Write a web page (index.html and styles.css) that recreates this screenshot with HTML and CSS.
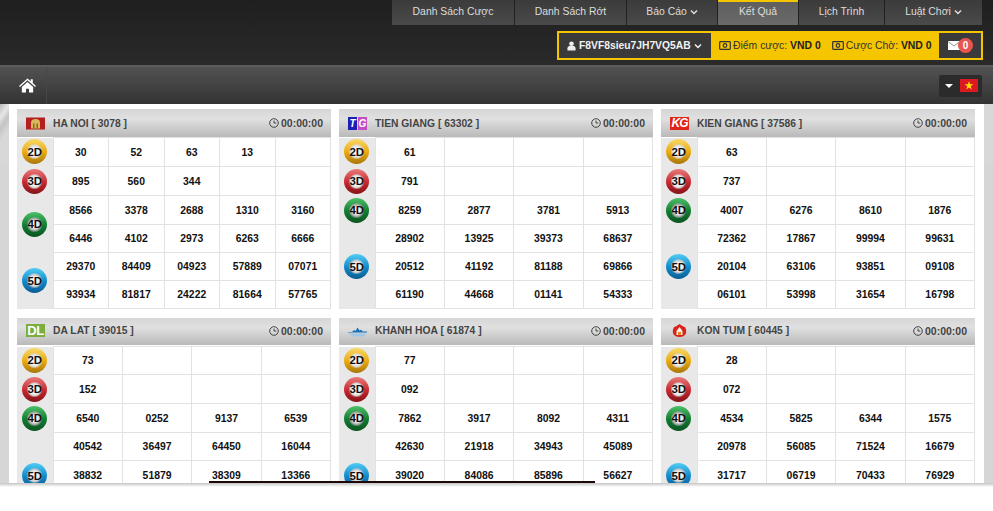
FILE: index.html
```html
<!DOCTYPE html>
<html lang="vi">
<head>
<meta charset="utf-8">
<title>Kết Quả</title>
<link rel="stylesheet" href="styles.css">
</head>
<body>
<header class="top">
  <nav class="nav">
    <a class="nav-item w1">Danh Sách Cược</a>
    <a class="nav-item w2">Danh Sách Rớt</a>
    <a class="nav-item w3">Báo Cáo <svg class="chev" viewBox="0 0 10 8"><path d="M1 2l4 4 4-4" /></svg></a>
    <a class="nav-item w4 active">Kết Quả</a>
    <a class="nav-item w5">Lịch Trình</a>
    <a class="nav-item w6">Luật Chơi <svg class="chev" viewBox="0 0 10 8"><path d="M1 2l4 4 4-4" /></svg></a>
  </nav>
  <div class="account-row">
    <div class="account">
      <div class="user">
        <svg class="user-icon" viewBox="0 0 10 11"><circle cx="5" cy="3" r="2.6"/><path d="M0.5 10.5V8q0-2 2-2.4h5q2 .4 2 2.4v2.5z"/></svg>
        <span>F8VF8sieu7JH7VQ5AB</span>
        <svg class="chev" viewBox="0 0 10 8"><path d="M1 2l4 4 4-4" /></svg>
      </div>
      <div class="balance">
        <svg class="money" viewBox="0 0 12 9"><rect x=".7" y=".7" width="10.6" height="7.6" rx=".8"/><circle cx="6" cy="4.5" r="1.8"/></svg>
        <span>Điểm cược: <b>VND 0</b></span>
      </div>
      <div class="balance second">
        <svg class="money" viewBox="0 0 12 9"><rect x=".7" y=".7" width="10.6" height="7.6" rx=".8"/><circle cx="6" cy="4.5" r="1.8"/></svg>
        <span>Cược Chờ: <b>VND 0</b></span>
      </div>
      <div class="mail">
        <svg class="mail-icon" viewBox="0 0 12 9"><rect width="12" height="9" fill="#fff"/><path d="M0 .5l6 4.5 6-4.5" fill="none" stroke="#777" stroke-width=".8"/></svg>
        <span class="mail-count">0</span>
      </div>
    </div>
  </div>
</header>

<div class="toolbar">
  <div class="home">
    <svg class="home-icon" viewBox="0 0 18 15"><path d="M9 0l3.4 3V1h2.2v3.9L18 8l-1 1-8-7-8 7-1-1z"/><path d="M3 9l6-5.2L15 9v6h-4.4v-4H7.400v4H3z"/></svg>
  </div>
  <div class="lang">
    <span class="caret"></span>
    <svg class="flag" viewBox="0 0 18 13"><rect width="18" height="13" fill="#da1a20"/><path d="M9 2.200l1.100 3.100h3.300l-2.700 2 1 3.200L9 8.600l-2.700 1.900 1-3.200-2.700-2h3.300z" fill="#fd0"/></svg>
  </div>
</div>

<main class="stage">
  <div class="sheet">
    <div class="cards">

      <section class="card">
        <h2 class="card-head">
          <svg class="logo" viewBox="0 0 19 12"><rect width="19" height="12" fill="#b3201f"/><path d="M5 11V5q0-3.500 4.500-3.500T14 5v6z" fill="#d9b75a"/><path d="M7 11V6h1.500v5zM10.500 11V6H12v5z" fill="#8a6b22"/></svg>
          <span class="card-title">HA NOI [ 3078 ]</span>
          <span class="timer"><svg class="clock" viewBox="0 0 10 10"><circle cx="5" cy="5" r="4.300"/><path d="M5 2.500V5h2.300"/></svg>00:00:00</span>
        </h2>
        <table class="grid">
          <tr class="r29"><th><span class="ball b2">2D</span></th><td>30</td><td>52</td><td>63</td><td>13</td><td></td></tr>
          <tr class="r29"><th><span class="ball b3">3D</span></th><td>895</td><td>560</td><td>344</td><td></td><td></td></tr>
          <tr class="r29"><th rowspan="2"><span class="ball b4">4D</span></th><td>8566</td><td>3378</td><td>2688</td><td>1310</td><td>3160</td></tr>
          <tr class="r28"><td>6446</td><td>4102</td><td>2973</td><td>6263</td><td>6666</td></tr>
          <tr class="r28"><th rowspan="2"><span class="ball b5">5D</span></th><td>29370</td><td>84409</td><td>04923</td><td>57889</td><td>07071</td></tr>
          <tr class="r28"><td>93934</td><td>81817</td><td>24222</td><td>81664</td><td>57765</td></tr>
        </table>
      </section>

      <section class="card">
        <h2 class="card-head">
          <span class="logo-text tg"><i>T</i><i>G</i></span>
          <span class="card-title">TIEN GIANG [ 63302 ]</span>
          <span class="timer"><svg class="clock" viewBox="0 0 10 10"><circle cx="5" cy="5" r="4.300"/><path d="M5 2.500V5h2.300"/></svg>00:00:00</span>
        </h2>
        <table class="grid">
          <tr class="r29"><th><span class="ball b2">2D</span></th><td>61</td><td></td><td></td><td></td></tr>
          <tr class="r29"><th><span class="ball b3">3D</span></th><td>791</td><td></td><td></td><td></td></tr>
          <tr class="r29"><th><span class="ball b4">4D</span></th><td>8259</td><td>2877</td><td>3781</td><td>5913</td></tr>
          <tr class="r28"><th rowspan="3"><span class="ball b5">5D</span></th><td>28902</td><td>13925</td><td>39373</td><td>68637</td></tr>
          <tr class="r28"><td>20512</td><td>41192</td><td>81188</td><td>69866</td></tr>
          <tr class="r28"><td>61190</td><td>44668</td><td>01141</td><td>54333</td></tr>
        </table>
      </section>

      <section class="card">
        <h2 class="card-head">
          <span class="logo-text kg">KG</span>
          <span class="card-title">KIEN GIANG [ 37586 ]</span>
          <span class="timer"><svg class="clock" viewBox="0 0 10 10"><circle cx="5" cy="5" r="4.300"/><path d="M5 2.500V5h2.300"/></svg>00:00:00</span>
        </h2>
        <table class="grid">
          <tr class="r29"><th><span class="ball b2">2D</span></th><td>63</td><td></td><td></td><td></td></tr>
          <tr class="r29"><th><span class="ball b3">3D</span></th><td>737</td><td></td><td></td><td></td></tr>
          <tr class="r29"><th><span class="ball b4">4D</span></th><td>4007</td><td>6276</td><td>8610</td><td>1876</td></tr>
          <tr class="r28"><th rowspan="3"><span class="ball b5">5D</span></th><td>72362</td><td>17867</td><td>99994</td><td>99631</td></tr>
          <tr class="r28"><td>20104</td><td>63106</td><td>93851</td><td>09108</td></tr>
          <tr class="r28"><td>06101</td><td>53998</td><td>31654</td><td>16798</td></tr>
        </table>
      </section>

      <section class="card">
        <h2 class="card-head low">
          <span class="logo-text dl">DL</span>
          <span class="card-title">DA LAT [ 39015 ]</span>
          <span class="timer"><svg class="clock" viewBox="0 0 10 10"><circle cx="5" cy="5" r="4.300"/><path d="M5 2.500V5h2.300"/></svg>00:00:00</span>
        </h2>
        <table class="grid">
          <tr class="r28"><th><span class="ball b2">2D</span></th><td>73</td><td></td><td></td><td></td></tr>
          <tr class="r29"><th><span class="ball b3">3D</span></th><td>152</td><td></td><td></td><td></td></tr>
          <tr class="r29"><th><span class="ball b4">4D</span></th><td>6540</td><td>0252</td><td>9137</td><td>6539</td></tr>
          <tr class="r28"><th rowspan="3"><span class="ball b5">5D</span></th><td>40542</td><td>36497</td><td>64450</td><td>16044</td></tr>
          <tr class="r29"><td>38832</td><td>51879</td><td>38309</td><td>13366</td></tr>
          <tr class="r29"><td></td><td></td><td></td><td></td></tr>
        </table>
      </section>

      <section class="card">
        <h2 class="card-head low">
          <svg class="logo" viewBox="0 0 19 12"><path d="M0 7.500h4l2-2 1.500 1 2-3.500 2 3 1.500-.8L15 7h4v1H0z" fill="#1d6fb8"/><path d="M1 9h17l-2 3H5z" fill="#9fc6e4"/></svg>
          <span class="card-title">KHANH HOA [ 61874 ]</span>
          <span class="timer"><svg class="clock" viewBox="0 0 10 10"><circle cx="5" cy="5" r="4.300"/><path d="M5 2.500V5h2.300"/></svg>00:00:00</span>
        </h2>
        <table class="grid">
          <tr class="r28"><th><span class="ball b2">2D</span></th><td>77</td><td></td><td></td><td></td></tr>
          <tr class="r29"><th><span class="ball b3">3D</span></th><td>092</td><td></td><td></td><td></td></tr>
          <tr class="r29"><th><span class="ball b4">4D</span></th><td>7862</td><td>3917</td><td>8092</td><td>4311</td></tr>
          <tr class="r28"><th rowspan="3"><span class="ball b5">5D</span></th><td>42630</td><td>21918</td><td>34943</td><td>45089</td></tr>
          <tr class="r29"><td>39020</td><td>84086</td><td>85896</td><td>56627</td></tr>
          <tr class="r29"><td></td><td></td><td></td><td></td></tr>
        </table>
      </section>

      <section class="card">
        <h2 class="card-head low">
          <svg class="logo" viewBox="0 0 19 13"><path d="M9.500 0q-4 3-5.500 3Q2 6 3 9.500 5 13 9.500 13 14 13 16 9.500 17 6 15 3q-1.500 0-5.500-3z" fill="#d8231f"/><path d="M9.500 3l3 4v4h-6V7z" fill="#f7efe2"/><path d="M8 8h3v3H8z" fill="#e98a1c"/></svg>
          <span class="card-title">KON TUM [ 60445 ]</span>
          <span class="timer"><svg class="clock" viewBox="0 0 10 10"><circle cx="5" cy="5" r="4.300"/><path d="M5 2.500V5h2.300"/></svg>00:00:00</span>
        </h2>
        <table class="grid">
          <tr class="r28"><th><span class="ball b2">2D</span></th><td>28</td><td></td><td></td><td></td></tr>
          <tr class="r29"><th><span class="ball b3">3D</span></th><td>072</td><td></td><td></td><td></td></tr>
          <tr class="r29"><th><span class="ball b4">4D</span></th><td>4534</td><td>5825</td><td>6344</td><td>1575</td></tr>
          <tr class="r28"><th rowspan="3"><span class="ball b5">5D</span></th><td>20978</td><td>56085</td><td>71524</td><td>16679</td></tr>
          <tr class="r29"><td>31717</td><td>06719</td><td>70433</td><td>76929</td></tr>
          <tr class="r29"><td></td><td></td><td></td><td></td></tr>
        </table>
      </section>

    </div>
  </div>
  <div class="edge-line"></div>
</main>
<div class="shade"></div>
</body>
</html>
```
FILE: styles.css
```css
* { box-sizing: border-box; }
html, body { margin: 0; height: 100%; }
body {
  background: #fff;
  font-family: "Liberation Sans", Arial, sans-serif;
  overflow: hidden;
}

/* top bar */
.top {
  height: 65px;
  background: linear-gradient(#1f1f1f, #2a2a2a);
}
.nav { display: flex; justify-content: flex-end; gap: 1px; padding-right: 11px; height: 25px; }
.nav-item {
  display: flex; align-items: center; justify-content: center; gap: 3px;
  height: 25px;
  padding-bottom: 2px;
  background: linear-gradient(#3b3b3b, #4a4a4a);
  color: #ddd;
  font-size: 10.400px;
}
.w1 { width: 122px; }
.w2 { width: 111px; }
.w3 { width: 90px; }
.w4 { width: 80px; }
.w5 { width: 85px; }
.w6 { width: 97px; }
.nav-item.active {
  background: linear-gradient(#5e5e5e, #6a6a6a);
  border-top: 2px solid #f5c500;
  padding-bottom: 4px;
}
.chev { width: 8px; height: 6px; flex: none; }
.chev path { fill: none; stroke: currentColor; stroke-width: 2; }

.account-row { display: flex; justify-content: flex-end; padding: 6px 10px 0 0; }
.account {
  display: flex; align-items: stretch;
  width: 426px; height: 29px;
  background: #f5c500;
  border: 2px solid #f5c500;
  font-size: 10.400px;
  color: #333;
}
.user {
  display: flex; align-items: center; gap: 3px;
  width: 152px; padding-left: 8px;
  background: #3a3a3a;
  color: #f2f2f2;
  font-size: 10.300px;
  font-weight: bold;
}
.user-icon { width: 9px; height: 10px; fill: #eee; }
.balance { display: flex; align-items: center; gap: 2px; padding-left: 8px; white-space: nowrap; }
.balance b { color: #222; }
.second { padding-left: 11px; }
.money { width: 12px; height: 9px; fill: none; stroke: #333; stroke-width: 1.200; }
.mail {
  display: flex; align-items: center;
  margin-left: auto; width: 42px; padding-left: 9px;
  background: #3a3a3a;
}
.mail-icon { width: 12px; height: 9px; }
.mail-count {
  width: 15px; height: 15px; margin-left: -2px;
  border-radius: 50%;
  background: #e8554e;
  color: #fff;
  font-size: 10px; font-weight: bold;
  line-height: 15px; text-align: center;
}

/* toolbar */
.toolbar {
  display: flex; align-items: center; justify-content: space-between;
  height: 39px;
  padding-right: 11px;
  border-top: 2px solid #5c5c5c;
  background: linear-gradient(#525252, #333);
}
.home { display: flex; align-items: center; height: 100%; padding: 0 10px 0 19px; border-right: 1px solid #474747; }
.home-icon { width: 17px; height: 15px; fill: #fff; }
.lang {
  display: flex; align-items: center; gap: 7px;
  width: 43px; height: 22px; padding-left: 6px;
  background: #2b2b2b;
  border-radius: 2px;
}
.caret { border: 4px solid transparent; border-top: 4px solid #fff; border-bottom: 0; }
.flag { width: 18px; height: 13px; }

/* results */
.stage {
  position: relative; height: 379px; overflow: hidden;
  background:
    linear-gradient(125deg, #b9b9b9 0, #e6e6e6 8px, #c4c4c4 14px, #d8d8d8 22px) 0 0 / 100% 60px no-repeat,
    #d6d6d6;
}
.sheet { margin: 0 9px; height: 100%; padding: 5px 9px 0 8px; background: #fff; }
.cards { display: grid; grid-template-columns: repeat(3, 314px); column-gap: 8px; row-gap: 9px; }
.card { background: #fff; }
.card-head {
  display: flex; align-items: center;
  height: 28px; margin: 0; padding: 0 8px 0 9px;
  background: linear-gradient(#d6d6d6, #e0e0e0 35%, #b9b9b9);
  color: #444;
  font-size: 10.300px;
  font-weight: bold;
}
.card-head.low { height: 27px; margin-bottom: 1px; padding-bottom: 2px; }
.logo { width: 19px; height: 13px; flex: none; }
.logo-text {
  display: block; width: 19px; height: 13px; flex: none;
  font-size: 11px; font-weight: bold; line-height: 13px; text-align: center;
}
.tg { display: flex; gap: 1px; }
.tg i { flex: 1; background: #1b1fb5; color: #fff; font-size: 10px; }
.tg i + i { background: #c64cc4; }
.kg { background: #e2231a; color: #fff; font-style: italic; font-size: 12px; letter-spacing: -1px; }
.dl { background: #7dac3f; color: #fff; font-size: 13px; letter-spacing: -.5px; }
.card-title { margin-left: 8px; }
.timer { display: flex; align-items: center; gap: 2px; margin-left: auto; font-size: 10.500px; }
.clock { width: 10px; height: 10px; fill: none; stroke: #444; stroke-width: 1; }

.grid { width: 100%; table-layout: fixed; border-collapse: collapse; }
.grid th {
  width: 36px; padding: 0;
  background: #e8e8e8;
  border-bottom: 1px solid #e8e8e8;
  text-align: center;
  vertical-align: middle;
}
.grid td {
  padding: 0;
  border: 1px solid #e2e2e2;
  color: #111;
  font-size: 10.400px;
  font-weight: bold;
  text-align: center;
}
.r29 { height: 29px; }
.r28 { height: 28px; }
.ball {
  display: inline-flex; align-items: center; justify-content: center;
  width: 25px; height: 25px;
  border-radius: 50%;
  color: #111;
  font-size: 11.500px;
  font-weight: bold;
  vertical-align: middle;
}
.b2 { background: radial-gradient(circle at 50% 50%, #fff 0 3px, #ddd 6px, transparent 8px), linear-gradient(#f9d96a, #e9a80f 55%, #a8760a); }
.b3 { background: radial-gradient(circle at 50% 50%, #fff 0 3px, #ddd 6px, transparent 8px), linear-gradient(#e97a7a, #c5272d 55%, #83141a); }
.b4 { background: radial-gradient(circle at 50% 50%, #fff 0 3px, #aaa 6px, transparent 8px), linear-gradient(#4cc067, #117a30 55%, #0b5520); }
.b5 { background: radial-gradient(circle at 50% 50%, #fff 0 3px, #ccc 6px, transparent 8px), linear-gradient(#50cdf5, #1187c9 55%, #0a5d92); }

.edge-line {
  position: absolute; left: 209px; bottom: 0;
  width: 386px; height: 2px;
  background: #1f0808;
}
.shade { height: 4px; background: linear-gradient(#c4c4c4, #fff); }
```
